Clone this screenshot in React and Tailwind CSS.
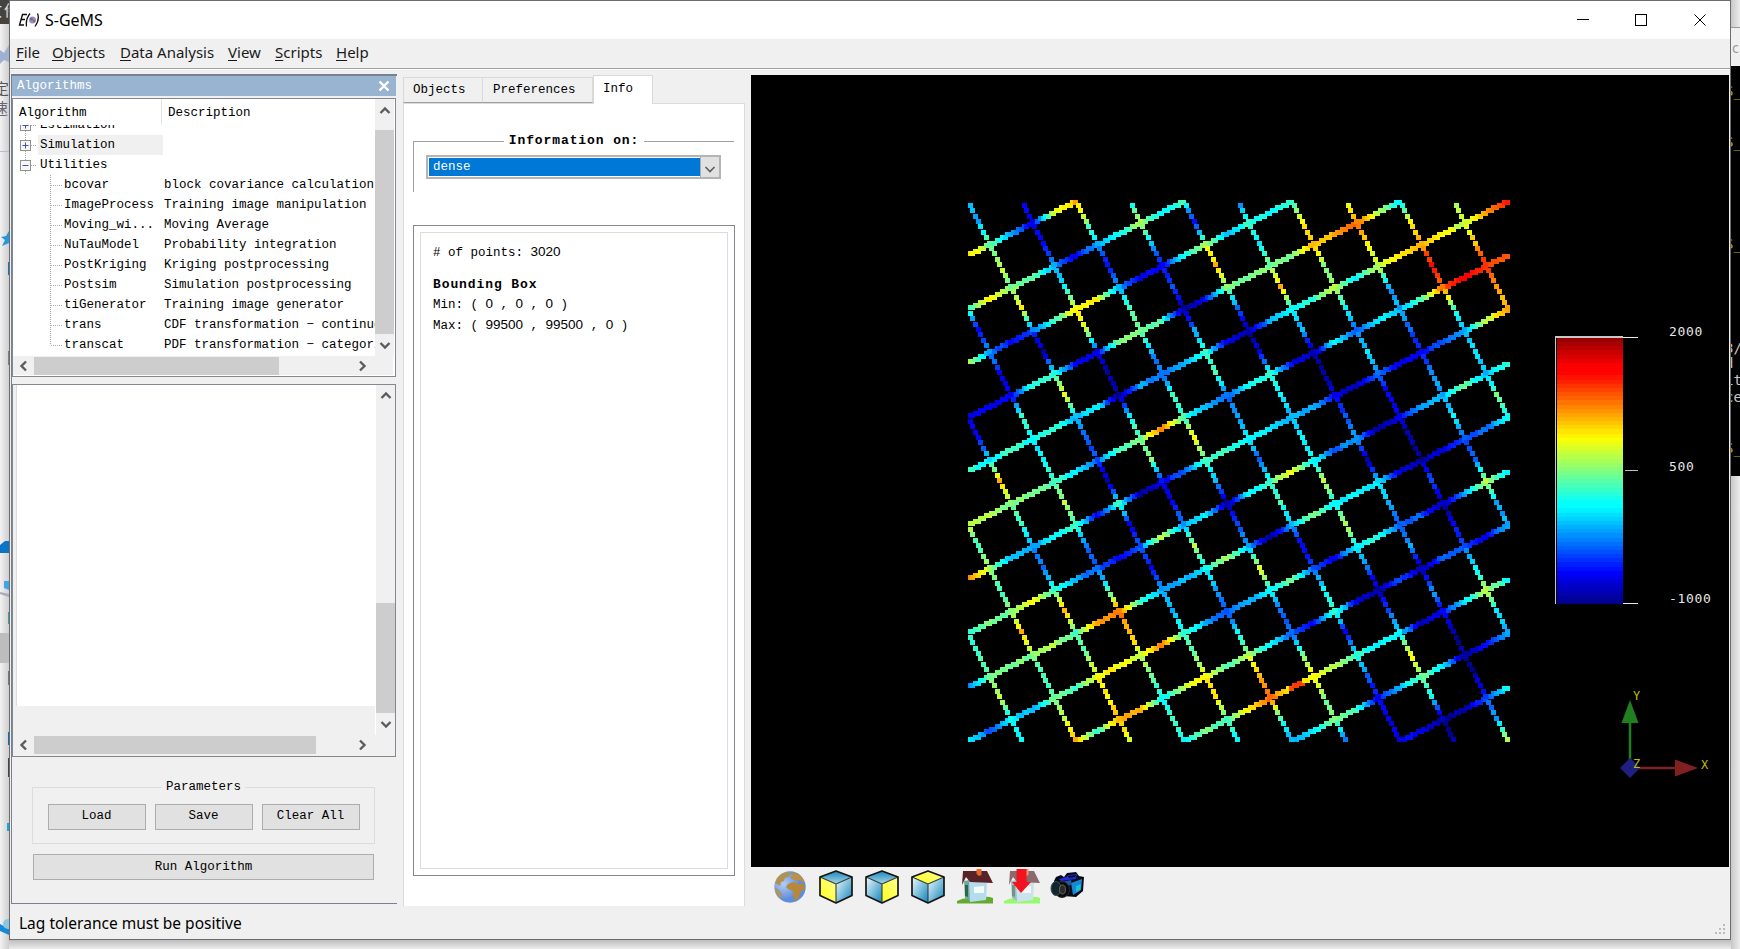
import React from "react";

const MONO = "font-['Liberation_Mono',monospace] text-[12.5px]";
const UI = "font-['Noto_Sans','Noto_Sans_CJK_SC',sans-serif]";

/* ---------- colour scale ---------- */
const LEVELS = [0.02, 0.1, 0.2, 0.28, 0.36, 0.43, 0.49, 0.56, 0.63, 0.7, 0.77, 0.84, 0.9, 0.98];
const KEYS = "0123456789ABCD";
const clamp = (v) => Math.max(0, Math.min(1, v));
function jet(t) {
  const r = clamp(Math.min(4 * t - 1.5, 4.6 - 4 * t));
  const g = clamp(Math.min(4 * t - 0.45, 3.5 - 4 * t));
  const b = clamp(Math.min(4 * t + 0.55, 2.5 - 4 * t));
  return `rgb(${Math.round(r * 255)},${Math.round(g * 255)},${Math.round(b * 255)})`;
}

/* shallow lines: [first sample, values every 8 cells] */
const SHALLOW = [
  [-1, "963179"],
  [-1, "58663134745"],
  [-1, "7312588311473545"],
  [-1, "111551166501666699A74"],
  [-1, "5454534032351034574789879B"],
  [-1, "776654256A532451042435ACBA"],
  [-1, "A7334515012554433102112379"],
  [-1, "56685321273404584230133635"],
  [-1, "266675" + "9A533473036444101224"],
  [-1, "424365887A5323462145220374"],
  [4, "959947857421510202213"],
  [9, "4658A88754401474"],
  [14, "34651364013"],
  [19, "110024"],
  [24, "7"],
];
/* values half-way down the steep lines, below each shallow line */
const STEEP = [
  [-1, "31"],
  [0, "7164"],
  [-1, "1841312"],
  [0, "107529487"],
  [-1, "158033296887"],
  [0, "9424551343C9"],
  [-1, "5570683404259"],
  [0, "522113242134"],
  [-1, "5995172570046"],
  [0, "756933817322"],
  [1, "478664242313"],
  [6, "758961234"],
  [11, "4562804"],
  [16, "2140"],
  [21, "03"],
];
const val = (c) => (c === undefined || c === "" ? null : LEVELS[KEYS.indexOf(c)]);
function shallowValue(k, s) {
  const row = SHALLOW[k];
  if (!row) return null;
  const at = (n) => val(row[1][n - row[0]]);
  const lo = Math.floor(s);
  const a = at(lo);
  const b = at(lo + 1);
  if (a === null) return b === null ? null : b;
  if (b === null) return a;
  return a + (b - a) * (s - lo);
}
const noise = (n) => {
  const x = Math.sin(n * 12.9898) * 43758.5453;
  return (x - Math.floor(x) - 0.5) * 0.05;
};

function buildPoints() {
  const pts = [];
  for (let k = 0; k <= 14; k++) {
    for (let i = 0; i <= 199; i++) {
      const j = Math.floor(19.5 + 20 * k - i / 2);
      if (j < 0 || j > 199) continue;
      const v = shallowValue(k, (i - 7.2) / 8);
      if (v === null) continue;
      const hot = k === 11 && i >= 119 && i <= 123 ? 0.17 : 0;
      pts.push([i, j, v + hot + noise(Math.floor(i / 3) + k * 91)]);
    }
  }
  for (let m = -5; m <= 9; m++) {
    for (let j = 1; j <= 199; j += 2) {
      const i = (j - 1) / 2 + 20 * m;
      if (i < 0 || i > 199) continue;
      const kf = (i - 7.2 - 16 * m) / 8;
      const k = Math.floor(kf);
      const f = kf - k;
      const s = 2 * m + k;
      const row = STEEP[k + 1];
      const mid = row ? val(row[1][(s - row[0]) / 2]) : null;
      const top = shallowValue(k, s);
      const bottom = shallowValue(k + 1, s + 1);
      const a = top ?? mid ?? bottom;
      const c = bottom ?? mid ?? top;
      const b = mid ?? ((a ?? 0.3) + (c ?? 0.3)) / 2;
      const v = f < 0.5 ? a + (b - a) * f * 2 : b + (c - b) * (f - 0.5) * 2;
      pts.push([i, j, (Number.isFinite(v) ? v : 0.3) + noise(i * 7 + j)]);
    }
  }
  return pts;
}
const POINTS = buildPoints();

function PointSet() {
  return (
    <svg width="978" height="792" className="block" shapeRendering="crispEdges">
      {POINTS.map(([i, j, v], n) => (
        <rect key={n} x={Math.round(216.600 + i * 2.7)} y={Math.round(125 + j * 2.7)} width="5" height="5" fill={jet(v)} />
      ))}
    </svg>
  );
}

function Legend() {
  const bands = Array.from({ length: 64 }, (_, n) => 1 - n / 63);
  return (
    <div className="absolute left-[804px] top-[261px] flex h-[268px] text-[#e6e6e6]">
      <div className="flex w-[68px] flex-col border-l border-t-2 border-[#c8c8c8] pl-px">
        {bands.map((t, n) => (
          <div key={n} className="flex-1" style={{ background: jet(t) }} />
        ))}
      </div>
      <div className="flex w-[15px] flex-col justify-between pt-px">
        <div className="h-px bg-[#e8e8e8]" />
        <div className="ml-[2px] h-px bg-[#c0c0c0]" />
        <div className="h-px bg-[#e8e8e8]" />
      </div>
      <div className="-my-[13px] flex flex-col justify-between pl-[31px] font-['DejaVu_Sans_Mono',monospace] text-[13px] leading-[17px] tracking-[0.7px]">
        <span>2000</span>
        <span className="pt-[3px]">500</span>
        <span className="pb-[10px]">-1000</span>
      </div>
    </div>
  );
}

function Axes() {
  return (
    <svg width="96" height="96" className="absolute left-[866px] top-[611px]">
      <path d="M13 36V76" stroke="#208020" strokeWidth="2.5" />
      <path d="M13 14L21.5 37H4.5Z" fill="#208020" />
      <path d="M18 82H62" stroke="#802020" strokeWidth="2.5" />
      <path d="M58 73.500L81 82L58 90.500Z" fill="#802020" />
      <path d="M13 72L23 82L13 92L3 82Z" fill="#202080" />
      <g fill="#bdbd10" fontFamily="DejaVu Sans Mono" fontSize="12">
        <text x="16" y="14">Y</text>
        <text x="16" y="82">Z</text>
        <text x="84" y="83">X</text>
      </g>
    </svg>
  );
}

/* ---------- small widgets ---------- */
const ARROWS = { up: "M2.500 9L7 4.500L11.500 9", down: "M2.500 5L7 9.500L11.500 5", left: "M9 2.500L4.500 7L9 11.500", right: "M5 2.500L9.500 7L5 11.500" };
function Arrow({ dir, w = 2.4, color = "#5c5c5c" }) {
  return (
    <svg width="14" height="14" viewBox="0 0 14 14" className="shrink-0">
      <path d={ARROWS[dir]} fill="none" stroke={color} strokeWidth={w} />
    </svg>
  );
}

function Button({ className = "", children }) {
  return (
    <button className={`flex items-center justify-center border border-[#adadad] bg-[#e1e1e1] ${className}`}>
      {children}
    </button>
  );
}

const ROWS = [
  ["bcovar", "block covariance calculation"],
  ["ImageProcess", "Training image manipulation"],
  ["Moving_wi...", "Moving Average"],
  ["NuTauModel", "Probability integration"],
  ["PostKriging", "Kriging postprocessing"],
  ["Postsim", "Simulation postprocessing"],
  ["tiGenerator", "Training image generator"],
  ["trans", "CDF transformation − continuous"],
  ["transcat", "PDF transformation − categorical"],
];

function Expander({ open }) {
  return (
    <svg width="18" height="20" className="shrink-0">
      <path d="M5.500 0V5M5.500 16V20M11 10.500H16" stroke="#a8a8a8" strokeDasharray="1 1" />
      <rect x="0.500" y="5.500" width="10" height="10" fill="#f6f6f6" stroke="#919191" />
      <path d={open ? "M2.500 10.500H8.500" : "M2.500 10.500H8.500M5.500 7.500V13.500"} stroke="#3c55a5" />
    </svg>
  );
}

function HorizontalBar({ thumb }) {
  return (
    <div className="mr-[2px] flex h-[19px] items-center bg-[#f0f0f0]">
      <div className="flex w-[21px] justify-center"><Arrow dir="left" /></div>
      <div className={`h-[18px] bg-[#cdcdcd] ${thumb}`} />
      <div className="ml-auto mr-[24px] flex"><Arrow dir="right" /></div>
    </div>
  );
}

function AlgorithmTree() {
  return (
    <div className="mt-px flex h-[279px] w-[384px] shrink-0 flex-col border border-[#828790] bg-white">
      <div className="flex h-[257px] shrink-0">
        <div className="flex w-[362px] flex-col overflow-hidden whitespace-nowrap">
          <div className="flex h-[26px] shrink-0 leading-[28px]">
            <span className="w-[149px] border-r border-[#e5e5e5] pl-[6px]">Algorithm</span>
            <span className="pl-[6px]">Description</span>
          </div>
          <div className="flex h-[231px] flex-col overflow-hidden leading-[20px]">
            <div className="-mt-[10px] flex h-[20px] shrink-0 pl-[7px]"><Expander /><span className="pl-[2px]">Estimation</span></div>
            <div className="flex h-[20px] shrink-0 pl-[7px]"><Expander /><span className="w-[125px] bg-[#f0f0f0] pl-[2px]">Simulation</span></div>
            <div className="flex h-[20px] shrink-0 pl-[7px]"><Expander open /><span className="pl-[2px]">Utilities</span></div>
            {ROWS.map(([name, text], n) => (
              <div key={name} className="flex h-[20px] shrink-0 pl-[37px]">
                <svg width="14" height="20" className="shrink-0">
                  <path d={n === ROWS.length - 1 ? "M0.500 0V10M1 10.500H12" : "M0.500 0V20M1 10.500H12"} stroke="#a8a8a8" strokeDasharray="1 1" fill="none" />
                </svg>
                <span className="w-[100px] shrink-0">{name}</span>
                <span>{text}</span>
              </div>
            ))}
          </div>
        </div>
        <div className="flex w-[19px] flex-col items-center bg-[#f0f0f0]">
          <div className="flex h-[31px] items-center pb-[7px]"><Arrow dir="up" /></div>
          <div className="h-[204px] w-full bg-[#cdcdcd]" />
          <div className="flex h-[22px] items-center"><Arrow dir="down" /></div>
        </div>
      </div>
      <HorizontalBar thumb="w-[245px]" />
    </div>
  );
}

function AlgorithmDock() {
  return (
    <div className={`flex h-[830px] w-[386px] flex-col border-t-2 border-b border-l border-[#7b7f92] ${MONO}`}>
      <div className="flex h-[20px] w-[384px] shrink-0 items-center justify-between bg-[#99b4d1] pl-[5px] pr-[6px] text-white">
        <span>Algorithms</span>
        <svg width="12" height="12"><path d="M1.500 1.500L10.500 10.500M10.500 1.500L1.500 10.500" stroke="#fff" strokeWidth="2.4" /></svg>
      </div>
      <div className="h-px shrink-0" />
      <AlgorithmTree />
      <div className="mt-[7px] flex h-[373px] w-[384px] shrink-0 flex-col border border-[#828790] bg-[#f0f0f0]">
        <div className="flex h-[350px] shrink-0">
          <div className="w-[363px] border-r border-white pl-[3px]">
            <div className="h-[321px] border-l border-[#dcdcdc] bg-white" />
          </div>
          <div className="flex w-[19px] flex-col items-center">
            <div className="flex h-[218px] items-start pt-[4px]"><Arrow dir="up" /></div>
            <div className="h-[110px] w-full bg-[#cdcdcd]" />
            <div className="flex h-[22px] items-center"><Arrow dir="down" /></div>
          </div>
        </div>
        <HorizontalBar thumb="w-[282px]" />
      </div>
      <div className="relative mt-[30px] ml-[20px] flex h-[57px] w-[343px] shrink-0 items-center justify-center gap-[9px] border border-[#dcdcdc] pt-[2px]">
        <span className="absolute -top-[9px] bg-[#f0f0f0] px-[4px] leading-[17px]">Parameters</span>
        <Button className="h-[26px] w-[98px]">Load</Button>
        <Button className="h-[26px] w-[98px]">Save</Button>
        <Button className="h-[26px] w-[98px]">Clear All</Button>
      </div>
      <Button className="mt-[10px] ml-[21px] h-[26px] w-[341px] shrink-0">Run Algorithm</Button>
    </div>
  );
}

const Num = ({ children }) => <span className="font-['Liberation_Sans',sans-serif] text-[13.5px] leading-none">{children}</span>;

function InfoPanel() {
  return (
    <div className={`flex h-[832px] w-[342px] flex-col pt-px ${MONO}`}>
      <div className="flex h-[28px] shrink-0 items-end">
        <div className="flex h-[26px] w-[80px] items-center border border-b-[#9aa0a0] border-[#d9d9d9] pl-[9px]">Objects</div>
        <div className="flex h-[26px] w-[110px] items-center border border-l-0 border-b-[#9aa0a0] border-[#d9d9d9] pl-[10px]">Preferences</div>
        <div className="z-10 -mb-px flex h-[29px] w-[60px] items-center border border-b-0 border-[#d9d9d9] bg-white pb-px pl-[9px]">Info</div>
      </div>
      <div className="flex flex-1 flex-col border border-b-0 border-[#dcdcdc] bg-white pl-[9px] pr-[10px]">
        <div className="mt-[28px] flex h-[18px] items-center font-bold">
          <div className="h-px w-[91px] bg-[#a0a0a0]" />
          <span className="w-[140px] text-center text-[13px] tracking-[0.9px]">Information on:</span>
          <div className="h-px flex-1 bg-[#a0a0a0]" />
        </div>
        <div className="-mt-[9px] h-[51px] border-l border-[#a0a0a0] pl-[12px] pt-[14px]">
          <div className="flex h-[24px] w-[295px] border-2 border-[#b4b4b4] bg-white">
            <div className="my-px ml-px flex w-[271px] items-center bg-[#0078d7] pl-[4px] text-white">dense</div>
            <div className="flex flex-1 items-center justify-center border-l border-[#adadad] bg-[#e1e1e1] pt-[3px]">
              <Arrow dir="down" w={1.6} />
            </div>
          </div>
        </div>
        <div className="mt-[33px] h-[651px] w-[322px] border border-[#828790] p-[6px]">
          <div className="flex h-full flex-col border border-[#dcdcdc] pl-[12px] pt-[10px] leading-[21px] whitespace-pre">
            <p className="h-[21px]"># of points: <Num>3020</Num></p>
            <p className="mt-[10px] h-[21px] text-[13px] font-bold tracking-[0.9px]">Bounding Box</p>
            <p className="h-[21px]">Min: ( <Num>0</Num> , <Num>0</Num> , <Num>0</Num> )</p>
            <p className="h-[21px]">Max: ( <Num>99500</Num> , <Num>99500</Num> , <Num>0</Num> )</p>
          </div>
        </div>
      </div>
    </div>
  );
}

/* ---------- toolbar icons ---------- */
function Cube({ face }) {
  const id = `c-${face}`;
  const fill = (f) => (f === face ? `url(#${id}-y)` : f === "top" ? `url(#${id}-t)` : `url(#${id}-b)`);
  return (
    <svg width="36" height="36" viewBox="0 0 36 36">
      <defs>
        <linearGradient id={`${id}-b`} x1="0" y1="0" x2="1" y2="1"><stop offset="0" stopColor="#f2fafd" /><stop offset="1" stopColor="#0d84bb" /></linearGradient>
        <linearGradient id={`${id}-t`} x1="0" y1="0" x2="0" y2="1"><stop offset="0" stopColor="#1a88bb" /><stop offset="1" stopColor="#a8d6e8" /></linearGradient>
        <linearGradient id={`${id}-y`} x1="0" y1="1" x2="1" y2="0"><stop offset="0" stopColor="#ffff19" /><stop offset="1" stopColor="#ffff90" /></linearGradient>
      </defs>
      <g strokeLinejoin="round">
        <path d="M18 2L34 8L18 15L2 8Z" fill={fill("top")} />
        <path d="M2 8L18 15V34L2 26.500Z" fill={fill("left")} />
        <path d="M34 8L18 15V34L34 26.500Z" fill={fill("right")} />
        <path d="M2 8L18 15L34 8M18 15V34" fill="none" stroke="#333d44" strokeWidth="1.1" />
        <path d="M18 2L34 8V26.500L18 34L2 26.500V8Z" fill="none" stroke="#141414" strokeWidth="1.700" />
      </g>
    </svg>
  );
}
function Globe() {
  return (
    <svg width="36" height="36" viewBox="0 0 36 36">
      <defs><radialGradient id="sea" cx=".3" cy=".4"><stop offset="0" stopColor="#b4cdf8" /><stop offset="1" stopColor="#5f8ddb" /></radialGradient></defs>
      <circle cx="18" cy="18" r="15.700" fill="url(#sea)" />
      <path d="M5 9Q10 3 17 3L19 5L16 8L13 9L12 12L9 13L8 17L5 15L3 14Z" fill="#b2924f" />
      <path d="M20 3Q29 5 32 12L31 14L28 11L25 12L20 10L18 8L21 6Z" fill="#bd913f" />
      <path d="M16 15L21 13L27 15L32 15L33 20L29 22L27 28L23 32L21 27L21 22L16 20L14 18Z" fill="#b5883a" />
      <path d="M3 18L7 21L10 25L9 30Q3 26 3 18Z" fill="#ad9465" />
    </svg>
  );
}
function House({ arrow }) {
  return (
    <svg width="38" height="37" viewBox="0 0 38 37">
      <g opacity={arrow ? 0.65 : 1}>
        <path d="M1 33Q10 28 20 31Q30 27 37 30V35.500H1Z" fill={arrow ? "#69ff28" : "#62ab2c"} />
        <path d="M8 13L14 12V33L9 30Z" fill="#6fa79c" />
        <path d="M9 17L12 17V29L9 28Z" fill="#2c6650" />
        <path d="M13 13L31 15L30 32L14 34Z" fill="#b5dced" />
        <path d="M7 3L31 3L37 15L14 14L10 9L6 17Z" fill="#582226" />
        <path d="M18 19L28 18V25L18 25Z" fill="#f3fbf5" />
        <path d="M20.500 1H25.500V7L23 8L20.500 6Z" fill="#e4692a" />
      </g>
      {arrow && <path d="M13.500 1H23.500V14H28L18 25L9 14H13.500Z" fill="#f5121f" />}
    </svg>
  );
}
function Camera() {
  return (
    <svg width="36" height="36" viewBox="0 0 36 36">
      <path d="M7 8L12 6L15 8L18 4L27 3L30 7L35 8L34 22L27 28L14 27L4 26L5 12Z" fill="#070b18" />
      <path d="M10 10L17 8L20 6L28 5L27 10L12 12Z" fill="#242bd0" />
      <path d="M19 7L27 6L26 8L20 9Z" fill="#0a0d30" />
      <path d="M22 14L33 10L32 21L24 26Z" fill="#1689d2" />
      <path d="M27 17L32 15L31 21L27 23Z" fill="#18c2d8" />
      <path d="M12 13L22 11L23 16L14 17Z" fill="#1c58ac" />
      <ellipse cx="13" cy="20.500" rx="7.500" ry="8" fill="#0a0a0a" stroke="#2f2f2f" />
      <ellipse cx="7" cy="19.500" rx="5" ry="7" fill="#15262a" stroke="#33525c" />
      <ellipse cx="13.500" cy="20.500" rx="3" ry="4.500" fill="#2a2a2a" stroke="#777" strokeWidth="0.8" />
    </svg>
  );
}

function Viewer() {
  return (
    <div className="flex w-[978px] flex-col pt-px">
      <div className="relative h-[792px] bg-black">
        <PointSet />
        <Legend />
        <Axes />
      </div>
      <div className="flex h-[40px] items-center gap-[10px] pl-[21px]">
        <Globe /><Cube face="left" /><Cube face="right" /><Cube face="top" />
        <House /><div className="-ml-px"><House arrow /></div><div className="-ml-[2px]"><Camera /></div>
      </div>
    </div>
  );
}

/* ---------- window ---------- */
function TitleBar() {
  return (
    <div className="flex h-[38px] items-center bg-white pl-[8px]">
      <svg width="22" height="18" viewBox="0 0 22 18">
        <path d="M9 3.500L4.500 3.500L1.500 14H6M3 8.500H7" fill="none" stroke="#111" strokeWidth="1.4" />
        <path d="M12 2.500Q7.500 8 8.500 15.500M19.500 2.500Q22 8 17 15.500" fill="none" stroke="#111" strokeWidth="1.3" />
        <circle cx="14.500" cy="9" r="3.500" fill="#9d90b4" /><circle cx="13.500" cy="8" r="1.500" fill="#5a6fb5" /><circle cx="16" cy="10" r="1.300" fill="#a85f72" />
      </svg>
      <span className={`pl-[5px] text-[16px] text-black ${UI}`}>S-GeMS</span>
      <svg width="150" height="20" className="ml-auto mr-[9px]" fill="none" stroke="#000" shapeRendering="crispEdges">
        <path d="M6 9.500H18" /><rect x="64.500" y="4.500" width="11" height="11" />
        <path d="M123.500 4.500L134.500 15.500M134.500 4.500L123.500 15.500" shapeRendering="auto" />
      </svg>
    </div>
  );
}

const MENU = [["F", "ile", "w-[36px]"], ["O", "bjects", "w-[68px]"], ["D", "ata Analysis", "w-[108px]"], ["V", "iew", "w-[47px]"], ["S", "cripts", "w-[61px]"], ["H", "elp", "w-[50px]"]];

export default function App() {
  return (
    <div className="flex h-[949px] w-[1740px] overflow-hidden bg-[#ececec]">
      <div className="h-[949px] w-[9px] shrink-0 overflow-hidden bg-gradient-to-r from-[#f2f2f2] to-[#cfcfcf]">
        <svg width="9" height="949">
          <rect width="9" height="24" fill="#454341" />
          <g fontFamily="Noto Sans CJK SC" fontSize="15">
            <text x="-13" y="16" fill="#e4e4e4">文</text><text x="4" y="16" fill="#e4e4e4">件</text>
            <text x="-6" y="94" fill="#555">定</text><text x="-7" y="114" fill="#667">速</text>
          </g>
          <path d="M0 50L4 53L9 45V62L4 60L0 64Z" fill="#9fb1d0" />
          <path d="M0 151.500H9" stroke="#b8bcc4" />
          <path d="M9 231L6 236L1 237L5 240L2 246L9 243Z" fill="#2498dc" />
          <rect x="8" y="262" width="2" height="13" fill="#1976b8" /><rect x="8" y="351" width="1" height="14" fill="#808080" />
          <path d="M0 545L5 541H9V553H0Z" fill="#0875c9" />
          <path d="M4 581H9V590L4 588Z" fill="#43a5e7" /><path d="M0 592L9 594V597L0 594Z" fill="#aab" />
          <rect x="8" y="612" width="1" height="12" fill="#489c90" /><rect y="633" width="9" height="30" fill="#bdbdbd" /><rect x="8" y="671" width="1" height="14" fill="#777" />
          <rect x="8" y="732" width="1" height="13" fill="#0870b8" /><rect x="8" y="758" width="1" height="19" fill="#444" /><rect x="7" y="823" width="2" height="8" fill="#17a8df" />
          <path d="M0 924L9 929V935L0 931Z" fill="#1689d8" /><circle cx="8" cy="924" r="5" fill="#8fc5dd" />
        </svg>
      </div>
      <div className="flex w-[1722px] shrink-0 flex-col">
        <div className="flex h-[940px] flex-col border border-[#6b6b70] bg-[#f0f0f0]">
          <TitleBar />
          <div className={`flex h-[30px] items-center border-b border-[#a0a0a0] pb-[2px] pl-[6px] text-[15px] text-[#1a1a1a] ${UI}`}>
            {MENU.map(([key, rest, w]) => (
              <span key={key} className={`whitespace-nowrap ${w}`}><span className="underline underline-offset-2">{key}</span>{rest}</span>
            ))}
          </div>
          <div className="flex h-[837px] shrink-0 border-t border-white pl-px pt-[4px]">
            <AlgorithmDock />
            <div className="w-[6px]" />
            <InfoPanel />
            <div className="w-[6px]" />
            <Viewer />
          </div>
          <div className={`flex h-[33px] items-center justify-between pl-[9px] pr-[3px] text-[15.500px] text-black ${UI}`}>
            <span className="leading-[20px]">Lag tolerance must be positive</span>
            <svg width="12" height="12" className="mt-[15px]" fill="#bcbcbc">
              <path d="M8 0h2v2h-2zM4 4h2v2h-2zM8 4h2v2h-2zM0 8h2v2h-2zM4 8h2v2h-2zM8 8h2v2h-2z" />
            </svg>
          </div>
        </div>
        <div className="h-[9px] bg-gradient-to-b from-[#bdbdbd] to-[#ececec]" />
      </div>
      <div className="flex w-[9px] shrink-0 flex-col overflow-hidden bg-gradient-to-r from-[#c8c8c8] to-[#ededed]">
        <div className="h-[28px] border-b border-[#999]" />
        <div className="h-[38px] bg-[#f0f0f0]">
          <svg width="9" height="38"><text x="1" y="25" fontFamily="Noto Sans" fontSize="14" fill="#999">c</text></svg>
        </div>
        <svg width="9" height="410" className="bg-black">
          <g fontFamily="DejaVu Sans Mono" fontSize="14" fill="#b5a800">
            <text x="-6" y="30">S_</text><text x="-6" y="81">S_</text><text x="-6" y="183">S_</text><text x="-6" y="387">S_</text>
          </g>
          <g fontFamily="DejaVu Sans Mono" fontSize="14" fill="#c8c8c8">
            <text x="-6" y="287">3/</text><text x="-6" y="302">d</text><text x="-6" y="319">it</text><text x="-6" y="336">ce</text>
          </g>
        </svg>
      </div>
    </div>
  );
}
